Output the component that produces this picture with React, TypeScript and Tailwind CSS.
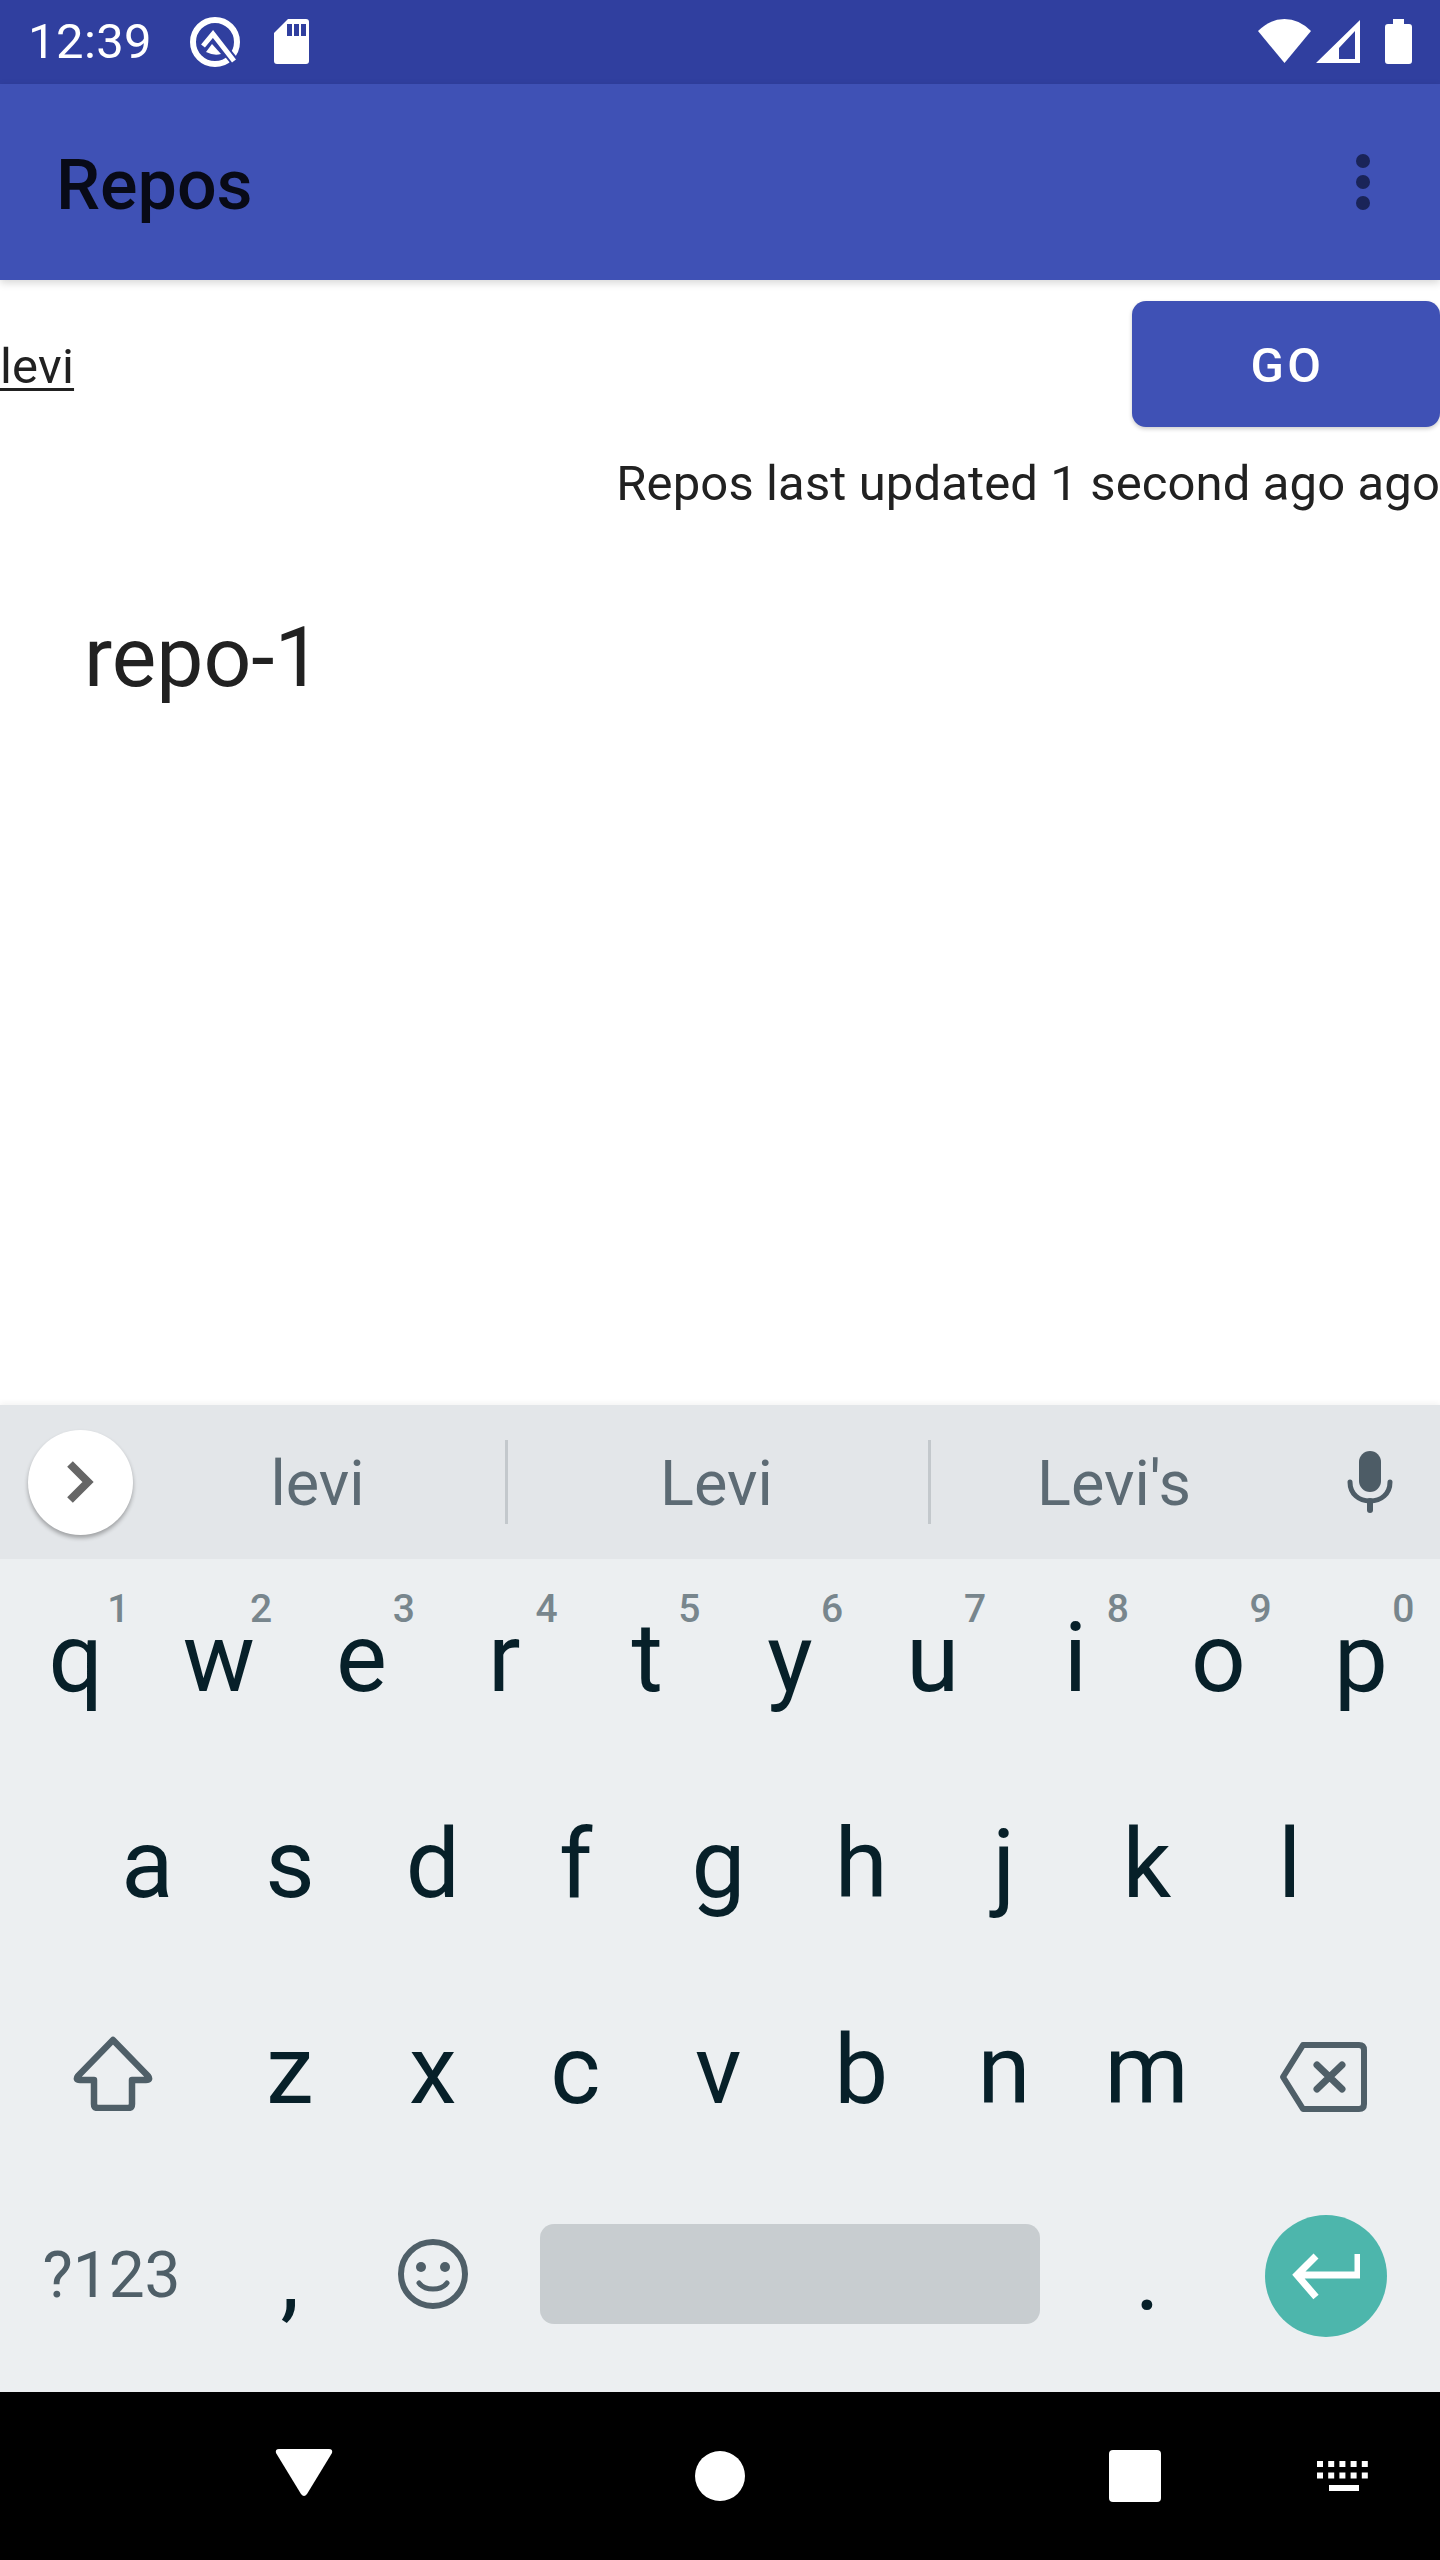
import React from "react";

const Q = () => (
  <svg width="50" height="50" viewBox="0 0 50 50" className="block">
    <circle cx="25" cy="25" r="22" fill="none" stroke="#fff" strokeWidth="6" />
    <path d="M29 25 L45 45" fill="none" stroke="#303f9f" strokeWidth="9" />
    <path d="M13 29 L23 17 L44 44" fill="none" stroke="#fff" strokeWidth="5" />
    <path d="M22 27 L31 37 Q24 39 16 35Z" fill="#fff" />
  </svg>
);

const Status = () => (
  <div className="h-[84px] bg-[#303f9f] flex items-center text-white shrink-0">
    <span className="ml-[28px] text-[49px] leading-[84px] w-[122px] whitespace-nowrap tracking-[0.4px]">12:39</span>
    <span className="ml-[40px] -mt-[1px]"><Q /></span>
    <svg width="35" height="45" viewBox="0 0 35 45" className="block ml-[34px] -mt-[1px]">
      <path d="M14 0 H32 Q35 0 35 3 V42 Q35 45 32 45 H3 Q0 45 0 42 V14Z" fill="#fff" />
      <rect x="13" y="5" width="5" height="12" fill="#303f9f" />
      <rect x="20" y="5" width="5" height="12" fill="#303f9f" />
      <rect x="27" y="5" width="5" height="12" fill="#303f9f" />
    </svg>
    <svg width="53" height="44" viewBox="0 0 53 44" className="block ml-auto -mt-[3px]">
      <path d="M26.5 44 L0 12 Q12 0 26.5 0 Q41 0 53 12Z" fill="#fff" />
    </svg>
    <svg width="44" height="43" viewBox="0 0 44 43" className="block ml-[5px] -mt-[1px]">
      <path fillRule="evenodd" d="M44 0 V43 H0Z M39 11 L23 28 V39 H39Z" fill="#fff" />
    </svg>
    <svg width="27" height="45" viewBox="0 0 27 45" className="block ml-[25px] mr-[28px] -mt-[1px]">
      <path d="M8 0 H19 V5 H24 Q27 5 27 8 V42 Q27 45 24 45 H3 Q0 45 0 42 V8 Q0 5 3 5 H8Z" fill="#fff" />
    </svg>
  </div>
);

const AppBar = () => (
  <div className="h-[196px] bg-[#3f51b5] flex items-center justify-between shrink-0 shadow-[0_3px_8px_rgba(0,0,0,0.16)] relative z-10">
    <span className="ml-[56px] mt-[6px] text-[70px] leading-[100px] font-medium text-[#080a17]">Repos</span>
    <div className="mr-[70px] flex flex-col gap-[7px]">
      <span className="block w-[14px] h-[14px] rounded-full bg-[#1a2458]" />
      <span className="block w-[14px] h-[14px] rounded-full bg-[#1a2458]" />
      <span className="block w-[14px] h-[14px] rounded-full bg-[#1a2458]" />
    </div>
  </div>
);

const Main = () => (
  <div className="flex-1 bg-white flex flex-col overflow-hidden">
    <div className="flex items-center justify-between pt-[21px]">
      <span className="mt-[6px] text-[49px] leading-[120px] tracking-[0.2px] text-[#212121] underline decoration-[3px] underline-offset-[5px]">levi</span>
      <button className="w-[308px] h-[126px] pt-[4px] pl-[3px] rounded-[14px] bg-[#3f51b5] text-white text-[49px] font-medium tracking-[3.5px] shadow-[0_2px_4px_rgba(0,0,0,0.2)]">GO</button>
    </div>
    <div className="text-right text-[49px] leading-[58px] tracking-[0.12px] text-[#212121] mt-[28px] whitespace-nowrap">Repos last updated 1 second ago ago</div>
    <div className="ml-[84px] mt-[95px] text-[84px] leading-[100px] text-[#212121]">repo-1</div>
  </div>
);

const Mic = () => (
  <svg width="46" height="62" viewBox="0 0 46 62" className="block">
    <rect x="12" y="0" width="22" height="41" rx="11" fill="#4d5c66" />
    <path d="M3 31 C3 43 12 50 23 50 C34 50 43 43 43 31" fill="none" stroke="#4d5c66" strokeWidth="5" strokeLinecap="round" />
    <path d="M23 50 V59" fill="none" stroke="#4d5c66" strokeWidth="6" strokeLinecap="round" />
  </svg>
);

const Strip = () => (
  <div className="h-[154px] bg-[#e3e6e9] flex items-center shrink-0 text-[63px] text-[#5d6b74] shadow-[0_-2px_6px_rgba(0,0,0,0.05)]">
    <div className="ml-[28px] w-[105px] h-[105px] rounded-full bg-white shadow-[0_3px_4px_rgba(0,0,0,0.3)] flex items-center justify-center shrink-0">
      <svg width="28" height="42" viewBox="0 0 28 42" className="block -ml-[2px]">
        <path d="M4 3 L22 21 L4 39" fill="none" stroke="#666" strokeWidth="8" />
      </svg>
    </div>
    <div className="w-[372px] text-center pt-[4px] pr-[3px]">levi</div>
    <div className="w-[3px] h-[84px] bg-[#c3c8cc]" />
    <div className="w-[420px] text-center pt-[4px] pr-[3px]">Levi</div>
    <div className="w-[3px] h-[84px] bg-[#c3c8cc]" />
    <div className="w-[369px] text-center pt-[4px] pr-[3px]">Levi's</div>
    <div className="w-[140px] flex justify-center"><Mic /></div>
  </div>
);

const Key = ({ c, d }: { c: string; d?: string }) => (
  <div className="relative w-[142.8px] h-[198px] text-center text-[96px] leading-[198px] text-[#072029]">
    {c}
    {d && <span className="absolute right-[18px] top-[27px] text-[39px] leading-[46px] font-medium text-[#78868d]">{d}</span>}
  </div>
);

const Row = ({ children }: { children: React.ReactNode }) => (
  <div className="h-[206px] flex pl-[4.5px]">{children}</div>
);

const Shift = () => (
  <svg width="80" height="75" viewBox="0 0 80 75" className="block">
    <path d="M40 4 L75 40 Q78 44 73 44 H59 V68 Q59 72 55 72 H25 Q21 72 21 68 V44 H7 Q2 44 5 40Z" fill="none" stroke="#4f5f68" strokeWidth="6.5" strokeLinejoin="round" />
  </svg>
);

const Backspace = () => (
  <svg width="88" height="70" viewBox="0 0 88 70" className="block">
    <path d="M24 3 H80 Q85 3 85 8 V62 Q85 67 80 67 H24 L4 35Z" fill="none" stroke="#4f5f68" strokeWidth="6" strokeLinejoin="round" />
    <path d="M38 23 L63 47 M63 23 L38 47" fill="none" stroke="#4f5f68" strokeWidth="7" strokeLinecap="round" />
  </svg>
);

const Smile = () => (
  <svg width="70" height="70" viewBox="0 0 70 70" className="block">
    <circle cx="35" cy="35" r="32" fill="none" stroke="#4f5f68" strokeWidth="6" />
    <circle cx="23" cy="28" r="5" fill="#4f5f68" />
    <circle cx="47" cy="28" r="5" fill="#4f5f68" />
    <path d="M21 44 C27 52 43 52 49 44" fill="none" stroke="#4f5f68" strokeWidth="5" strokeLinecap="round" />
  </svg>
);

const Keyboard = () => (
  <div className="flex-1 bg-[#eceff1] overflow-hidden">
    <Row>
      {"qwertyuiop".split("").map((c, i) => (
        <Key key={c} c={c} d={"1234567890"[i]} />
      ))}
    </Row>
    <Row>
      <div className="w-[71.4px]" />
      {"asdfghjkl".split("").map((c) => (
        <Key key={c} c={c} />
      ))}
    </Row>
    <Row>
      <div className="w-[214px] h-[198px] flex items-center justify-center pt-[6px] pl-[3px]"><Shift /></div>
      {"zxcvbnm".split("").map((c) => (
        <Key key={c} c={c} />
      ))}
      <div className="w-[214px] h-[198px] flex items-center justify-center pt-[14px] pr-[4px]"><Backspace /></div>
    </Row>
    <div className="flex pl-[4.5px]">
      <div className="w-[214px] h-[198px] text-center text-[64px] leading-[198px] text-[#4f5f68]">?123</div>
      <Key c="," />
      <div className="w-[142.8px] h-[198px] flex items-center justify-center -mt-[2px]"><Smile /></div>
      <div className="w-[572px] h-[198px] flex items-center justify-center">
        <div className="w-[500px] h-[100px] rounded-[14px] bg-[#c8cdd0] -mt-[4px]" />
      </div>
      <Key c="." />
      <div className="w-[214px] h-[198px] flex items-center justify-center">
        <div className="w-[122px] h-[122px] rounded-full bg-[#4db6ac] flex items-center justify-center">
          <svg width="68" height="50" viewBox="0 0 68 50" className="block">
            <path d="M66 3 V24 H6 M24 5 L5 24 L24 46" fill="none" stroke="#fff" strokeWidth="7" />
          </svg>
        </div>
      </div>
    </div>
  </div>
);

const Nav = () => (
  <div className="h-[168px] bg-black flex items-center shrink-0">
    <svg width="58" height="50" viewBox="0 0 58 50" className="block ml-[275px] -mt-[7px]">
      <path d="M4 1 H54 Q58 1 57 5 L32 46 Q29 50 26 46 L1 5 Q0 1 4 1Z" fill="#fff" />
    </svg>
    <span className="block ml-[362px] w-[50px] h-[50px] rounded-full bg-white" />
    <span className="block ml-[364px] w-[52px] h-[52px] rounded-[4px] bg-white" />
    <svg width="54" height="30" viewBox="0 0 54 30" className="block ml-[156px]">
      {[0, 11.2, 22.4, 33.6, 44.8].map((x) => (
        <React.Fragment key={x}>
          <rect x={x} y="0" width="6" height="6" fill="#fff" />
          <rect x={x} y="11.5" width="6" height="6" fill="#fff" />
        </React.Fragment>
      ))}
      <rect x="12" y="24" width="30" height="6" fill="#fff" />
    </svg>
  </div>
);

export default function App() {
  return (
    <div className="w-[1440px] h-[2560px] flex flex-col overflow-hidden bg-white font-[Roboto,sans-serif]">
      <Status />
      <AppBar />
      <Main />
      <div className="h-[987px] flex flex-col shrink-0">
        <Strip />
        <Keyboard />
      </div>
      <Nav />
    </div>
  );
}
